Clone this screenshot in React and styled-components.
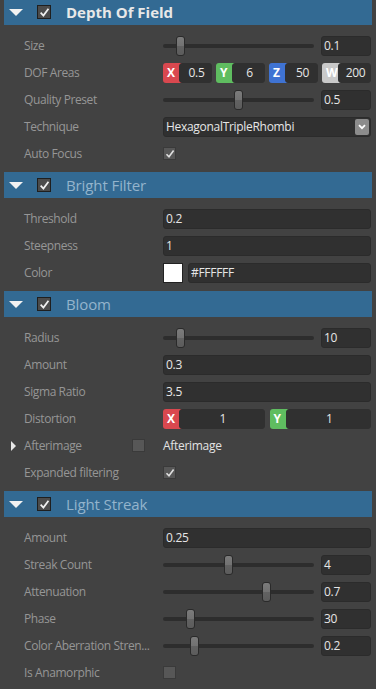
import React from 'react'
import styled, { createGlobalStyle } from 'styled-components'

const bg = '#424242'
const headerBlue = '#336a93'
const fieldBg = '#303030'
const labelGrey = '#969696'

const GlobalStyle = createGlobalStyle`
  html, body {
    margin: 0;
    padding: 0;
    background: ${bg};
  }
  body {
    font-family: "Open Sans", "Noto Sans", sans-serif;
    overflow: hidden;
  }
`

const Panel = styled.div`
  width: 376px;
  height: 689px;
  margin-top: -1px;
  background: ${bg};
  display: flex;
  flex-direction: column;
`
const Section = styled.div`
  display: flex;
  flex-direction: column;
`
const Header = styled.div`
  height: 26px;
  margin: 0 4px;
  background: ${headerBlue};
  display: flex;
  align-items: center;
  padding-left: 5px;
`
const Triangle = styled.span`
  width: 0;
  height: 0;
  border-left: 7px solid transparent;
  border-right: 7px solid transparent;
  border-top: 7px solid #f2f2f2;
  margin-right: 14px;
`
const HeaderTitle = styled.span`
  margin-left: 15px;
  font-size: 15px;
  font-weight: ${p => (p.active ? 700 : 400)};
  color: ${p => (p.active ? '#e8e8e8' : '#94b4cc')};
  letter-spacing: ${p => (p.active ? '0' : '-0.1px')};
`
const Body = styled.div`
  display: flex;
  flex-direction: column;
  padding: 7px 0 5px;
`
const Row = styled.div`
  height: 27px;
  display: grid;
  grid-template-columns: 139px 1fr;
  align-items: center;
  padding: 0 5px 0 24px;
`
const Label = styled.div`
  display: flex;
  align-items: center;
  font-size: 12px;
  color: ${labelGrey};
  white-space: nowrap;
  letter-spacing: -0.4px;
`
const Caret = styled.span`
  width: 0;
  height: 0;
  border-top: 5px solid transparent;
  border-bottom: 5px solid transparent;
  border-left: 5px solid #e6e6e6;
  margin-left: -13px;
  margin-right: 8px;
`
const Value = styled.div`
  display: flex;
  align-items: center;
  gap: ${p => p.gap || 0}px;
  min-width: 0;
`
const Field = styled.div`
  flex: 1;
  height: 20px;
  box-sizing: border-box;
  background: ${fieldBg};
  border: 1px solid #2b2b2b;
  border-radius: 3px;
  display: flex;
  align-items: center;
  justify-content: ${p => (p.center ? 'center' : 'flex-start')};
  padding-left: ${p => (p.center ? 0 : 2)}px;
  font-size: 12px;
  color: #e6e6e6;
  letter-spacing: -0.3px;
  min-width: 0;
  white-space: nowrap;
`
const NumBox = styled(Field)`
  flex: 0 0 50px;
`
const SliderTrack = styled.div`
  flex: 1;
  height: 4px;
  margin-right: 7px;
  background: #2d2d2d;
  border-radius: 2px;
  position: relative;
`
const Thumb = styled.div`
  position: absolute;
  top: -8px;
  width: 9px;
  height: 20px;
  box-sizing: border-box;
  margin-left: -4.5px;
  border: 1px solid #2a2a2a;
  border-radius: 3px;
  background: linear-gradient(#7b7b7b 0%, #727272 50%, #626262 51%, #5c5c5c 100%);
`
const VecItem = styled.div`
  flex: 1;
  display: flex;
  height: 20px;
`
const VecTag = styled.div`
  width: 19px;
  flex: 0 0 19px;
  background: ${p => p.color};
  border-radius: 3px 0 0 3px;
  color: #fff;
  font-weight: 700;
  font-size: 12px;
  display: flex;
  align-items: center;
  padding-left: 4px;
  box-sizing: border-box;
`
const VecField = styled(Field)`
  margin-left: -3px;
  border-color: ${fieldBg};
  padding-left: 2px;
`
const Select = styled(Field)`
  position: relative;
  padding-right: 16px;
`
const SelectButton = styled.div`
  position: absolute;
  right: 1px;
  top: 1px;
  width: 14px;
  height: 16px;
  background: #8c8c8c;
  border-radius: 2px;
  display: flex;
  align-items: center;
  justify-content: center;
`
const CheckBox = styled.div`
  width: ${p => p.size}px;
  height: ${p => p.size}px;
  box-sizing: border-box;
  background: ${p => (p.dark ? '#4b4b4b' : '#575757')};
  border: 1px solid ${p => (p.dark ? '#1f1f1f' : '#3a3a3a')};
  display: flex;
  align-items: center;
  justify-content: center;
  margin-left: ${p => (p.push ? 'auto' : 0)};
  margin-right: ${p => (p.push ? '18px' : 0)};
`
const Swatch = styled.div`
  width: 20px;
  height: 20px;
  box-sizing: border-box;
  background: #fff;
  border: 1px solid #222;
  margin-right: 5px;
`
const PlainText = styled.span`
  font-size: 12px;
  color: #e2e2e2;
  letter-spacing: -0.3px;
`

const Check = ({ color = '#e0e0e0', size = 10 }) => (
  <svg width={size} height={size} viewBox="0 0 10 10">
    <path d="M1.5 5.2 L4 7.8 L8.6 1.6" fill="none" stroke={color} strokeWidth="1.6" />
  </svg>
)

const Chevron = () => (
  <svg width="8" height="6" viewBox="0 0 8 6">
    <path d="M1 1.2 L4 4.2 L7 1.2" fill="none" stroke="#fff" strokeWidth="1.8" />
  </svg>
)

const SectionHeader = ({ title, active }) => (
  <Header>
    <Triangle />
    <CheckBox size={14} dark>
      <Check color="#f0f0f0" size={11} />
    </CheckBox>
    <HeaderTitle active={active}>{title}</HeaderTitle>
  </Header>
)

const SliderRow = ({ label, pos, value }) => (
  <Row>
    <Label>{label}</Label>
    <Value>
      <SliderTrack>
        <Thumb style={{ left: `${5 + pos * 140}px` }} />
      </SliderTrack>
      <NumBox>{value}</NumBox>
    </Value>
  </Row>
)

const FieldRow = ({ label, value }) => (
  <Row>
    <Label>{label}</Label>
    <Value>
      <Field>{value}</Field>
    </Value>
  </Row>
)

const CheckRow = ({ label, checked }) => (
  <Row>
    <Label>{label}</Label>
    <Value>
      <CheckBox size={13}>{checked && <Check />}</CheckBox>
    </Value>
  </Row>
)

const vecColors = { X: '#d9484f', Y: '#5fbd60', Z: '#3f73d3', W: '#c9c9c9' }

const VectorRow = ({ label, items }) => (
  <Row>
    <Label>{label}</Label>
    <Value gap={items.length > 2 ? 4 : 5}>
      {items.map(([axis, v]) => (
        <VecItem key={axis}>
          <VecTag color={vecColors[axis]}>{axis}</VecTag>
          <VecField center>{v}</VecField>
        </VecItem>
      ))}
    </Value>
  </Row>
)

export default function App() {
  return (
    <>
      <GlobalStyle />
      <Panel>
        <Section>
          <SectionHeader title="Depth Of Field" active />
          <Body>
            <SliderRow label="Size" pos={0.086} value="0.1" />
            <VectorRow
              label="DOF Areas"
              items={[['X', '0.5'], ['Y', '6'], ['Z', '50'], ['W', '200']]}
            />
            <SliderRow label="Quality Preset" pos={0.5} value="0.5" />
            <Row>
              <Label>Technique</Label>
              <Value>
                <Select>
                  HexagonalTripleRhombi
                  <SelectButton>
                    <Chevron />
                  </SelectButton>
                </Select>
              </Value>
            </Row>
            <CheckRow label="Auto Focus" checked />
          </Body>
        </Section>

        <Section>
          <SectionHeader title="Bright Filter" />
          <Body>
            <FieldRow label="Threshold" value="0.2" />
            <FieldRow label="Steepness" value="1" />
            <Row>
              <Label>Color</Label>
              <Value>
                <Swatch />
                <Field>#FFFFFF</Field>
              </Value>
            </Row>
          </Body>
        </Section>

        <Section>
          <SectionHeader title="Bloom" />
          <Body>
            <SliderRow label="Radius" pos={0.086} value="10" />
            <FieldRow label="Amount" value="0.3" />
            <FieldRow label="Sigma Ratio" value="3.5" />
            <VectorRow label="Distortion" items={[['X', '1'], ['Y', '1']]} />
            <Row>
              <Label>
                <Caret />
                Afterimage
                <CheckBox size={13} push />
              </Label>
              <Value>
                <PlainText>Afterimage</PlainText>
              </Value>
            </Row>
            <CheckRow label="Expanded filtering" checked />
          </Body>
        </Section>

        <Section>
          <SectionHeader title="Light Streak" />
          <Body>
            <FieldRow label="Amount" value="0.25" />
            <SliderRow label="Streak Count" pos={0.43} value="4" />
            <SliderRow label="Attenuation" pos={0.7} value="0.7" />
            <SliderRow label="Phase" pos={0.16} value="30" />
            <SliderRow label="Color Aberration Stren..." pos={0.19} value="0.2" />
            <CheckRow label="Is Anamorphic" />
          </Body>
        </Section>
      </Panel>
    </>
  )
}
